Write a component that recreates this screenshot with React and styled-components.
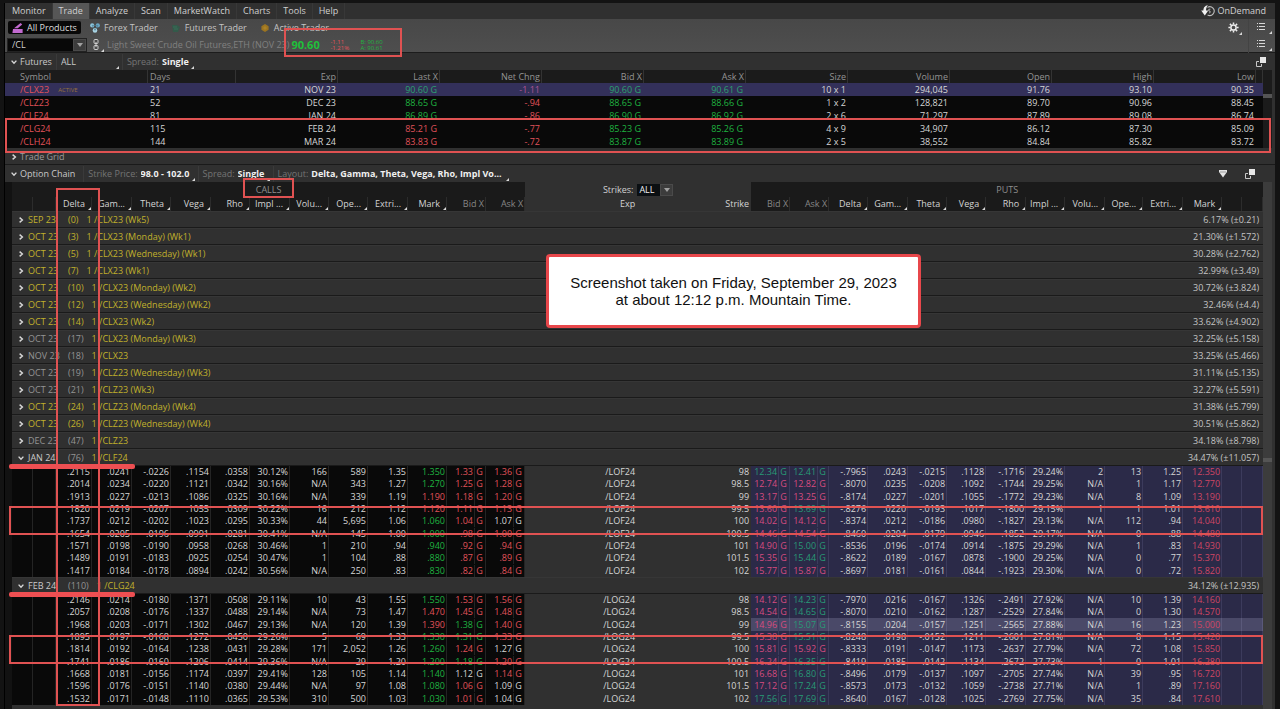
import React, { useState } from "react";
import styled, { createGlobalStyle, css } from "styled-components";

const GlobalStyle = createGlobalStyle`
  * {
    box-sizing: border-box;
  }
  body {
    margin: 0;
    background: #0c0c0c;
    color: #d0d0d0;
    font-family: "Open Sans", "Noto Sans", sans-serif;
    font-size: 9px;
    line-height: 12px;
  }
  button, input, select {
    font: inherit;
    color: inherit;
    border: 0;
    padding: 0;
    margin: 0;
    background: none;
  }
`;

const tones = {
  up: "#1fb340",
  down: "#e0525a",
  flat: "#d6d6d6",
  upSelected: "#2ca070",
  downSelected: "#b05696",
  upPut: "#289a76",
  downPut: "#d84c80",
  mark: "#d04664",
};

const menuItems = ["Monitor", "Trade", "Analyze", "Scan", "MarketWatch", "Charts", "Tools", "Help"];

const futuresColumns = ["Symbol", "Days", "Exp", "Last X", "Net Chng", "Bid X", "Ask X", "Size", "Volume", "Open", "High", "Low"];
const futuresWidths = [143, 88, 102, 102, 102, 102, 102, 102, 102, 102, 102, 102, 7];

const futures = [
  ["/CLX23", "21", "NOV 23", "90.60 G", "-1.11", "90.60 G", "90.61 G", "10 x 1", "294,045", "91.76", "93.10", "90.35"],
  ["/CLZ23", "52", "DEC 23", "88.65 G", "-.94", "88.65 G", "88.66 G", "1 x 2", "128,821", "89.70", "90.96", "88.45"],
  ["/CLF24", "81", "JAN 24", "86.89 G", "-.86", "86.90 G", "86.92 G", "2 x 6", "71,297", "87.89", "89.08", "86.74"],
  ["/CLG24", "115", "FEB 24", "85.21 G", "-.77", "85.23 G", "85.26 G", "4 x 9", "34,907", "86.12", "87.30", "85.09"],
  ["/CLH24", "144", "MAR 24", "83.83 G", "-.72", "83.87 G", "83.89 G", "2 x 5", "38,552", "84.84", "85.82", "83.72"],
];

const greeks = ["Delta", "Gam...", "Theta", "Vega", "Rho", "Impl ...", "Volu...", "Ope...", "Extri...", "Mark"];

const chainWidths = [
  21, 23, 36, 40, 39, 40, 39, 40, 39, 39, 40, 39, 39, 39,
  112, 114,
  39, 39, 39, 40, 39, 39, 40, 39, 40, 38, 40, 39, 20, 21,
];

// month, days, name, implied move, weekly (yellow) or not
const expirations = [
  ["SEP 23", 0, "1 /CLX23 (Wk5)", "6.17% (±0.21)", true],
  ["OCT 23", 3, "1 /CLX23 (Monday) (Wk1)", "21.30% (±1.572)", true],
  ["OCT 23", 5, "1 /CLX23 (Wednesday) (Wk1)", "30.28% (±2.762)", true],
  ["OCT 23", 7, "1 /CLX23 (Wk1)", "32.99% (±3.49)", true],
  ["OCT 23", 10, "1 /CLX23 (Monday) (Wk2)", "30.72% (±3.824)", true],
  ["OCT 23", 12, "1 /CLX23 (Wednesday) (Wk2)", "32.46% (±4.4)", true],
  ["OCT 23", 14, "1 /CLX23 (Wk2)", "33.62% (±4.902)", true],
  ["OCT 23", 17, "1 /CLX23 (Monday) (Wk3)", "32.25% (±5.158)", false],
  ["NOV 23", 18, "1 /CLX23", "33.25% (±5.466)", false],
  ["OCT 23", 19, "1 /CLZ23 (Wednesday) (Wk3)", "31.11% (±5.135)", false],
  ["OCT 23", 21, "1 /CLZ23 (Wk3)", "32.27% (±5.591)", false],
  ["OCT 23", 24, "1 /CLZ23 (Monday) (Wk4)", "31.38% (±5.799)", true],
  ["OCT 23", 26, "1 /CLZ23 (Wednesday) (Wk4)", "30.51% (±5.862)", true],
  ["DEC 23", 47, "1 /CLZ23", "34.18% (±8.798)", false],
];

// colours: mark, bid, ask for calls, then bid, ask for puts
const janRows = [
  ["98", ".2115 .0241 -.0226 .1154 .0358 30.12% 166 589 1.35 1.350", "1.33 1.36", "12.34 12.41", "-.7965 .0243 -.0215 .1128 -.1716 29.24% 2 13 1.25 12.350", "grrgg"],
  ["98.5", ".2014 .0234 -.0220 .1121 .0342 30.16% N/A 343 1.27 1.270", "1.25 1.28", "12.74 12.82", "-.8070 .0235 -.0208 .1092 -.1744 29.25% N/A 1 1.17 12.770", "grrrr"],
  ["99", ".1913 .0227 -.0213 .1086 .0325 30.16% N/A 339 1.19 1.190", "1.18 1.20", "13.17 13.25", "-.8174 .0227 -.0201 .1055 -.1772 29.23% N/A 8 1.09 13.190", "rrrrr"],
  ["99.5", ".1820 .0219 -.0207 .1055 .0309 30.22% 16 212 1.12 1.120", "1.11 1.13", "13.60 13.69", "-.8276 .0220 -.0193 .1017 -.1800 29.15% 1 1 1.01 13.610", "rrrrg"],
  ["100", ".1737 .0212 -.0202 .1023 .0295 30.33% 44 5,695 1.06 1.060", "1.04 1.07", "14.02 14.12", "-.8374 .0212 -.0186 .0980 -.1827 29.13% N/A 112 .94 14.040", "grwrr"],
  ["100.5", ".1654 .0205 -.0196 .0991 .0281 30.41% N/A 145 1.00 1.000", ".98 1.00", "14.46 14.54", "-.8460 .0204 -.0179 .0946 -.1852 29.17% N/A 0 .88 14.480", "grrrr"],
  ["101", ".1571 .0198 -.0190 .0958 .0268 30.46% 1 210 .94 .940", ".92 .94", "14.90 15.00", "-.8536 .0196 -.0174 .0914 -.1875 29.29% N/A 1 .83 14.930", "grrrg"],
  ["101.5", ".1489 .0191 -.0183 .0925 .0254 30.47% 1 104 .88 .880", ".87 .89", "15.35 15.44", "-.8622 .0189 -.0167 .0878 -.1900 29.25% N/A 0 .77 15.370", "grrrg"],
  ["102", ".1417 .0184 -.0178 .0894 .0242 30.56% N/A 250 .83 .830", ".82 .84", "15.77 15.87", "-.8697 .0181 -.0161 .0844 -.1923 29.30% N/A 0 .72 15.820", "grrrr"],
];

const febRows = [
  ["98", ".2146 .0214 -.0180 .1371 .0508 29.11% 10 43 1.55 1.550", "1.53 1.56", "14.12 14.23", "-.7970 .0216 -.0167 .1326 -.2491 27.92% N/A 10 1.39 14.160", "grrrg"],
  ["98.5", ".2057 .0208 -.0176 .1337 .0488 29.14% N/A 73 1.47 1.470", "1.45 1.48", "14.54 14.65", "-.8070 .0210 -.0162 .1287 -.2529 27.84% N/A 0 1.30 14.570", "rrrrg"],
  ["99", ".1968 .0203 -.0171 .1302 .0467 29.13% N/A 120 1.39 1.390", "1.38 1.40", "14.96 15.07", "-.8155 .0204 -.0157 .1251 -.2565 27.88% N/A 16 1.23 15.000", "rgrrg"],
  ["99.5", ".1895 .0197 -.0168 .1272 .0450 29.26% 5 69 1.33 1.330", "1.31 1.33", "15.38 15.51", "-.8248 .0198 -.0152 .1211 -.2601 27.81% N/A 8 1.15 15.420", "ggrrg"],
  ["100", ".1814 .0192 -.0164 .1238 .0431 29.28% 171 2,052 1.26 1.260", "1.24 1.27", "15.81 15.92", "-.8333 .0191 -.0147 .1173 -.2637 27.79% N/A 72 1.08 15.850", "grwrr"],
  ["100.5", ".1741 .0186 -.0160 .1206 .0414 29.36% N/A 29 1.20 1.200", "1.18 1.20", "16.24 16.35", "-.8419 .0185 -.0142 .1134 -.2672 27.73% 1 0 1.01 16.280", "ggrrg"],
  ["101", ".1668 .0181 -.0156 .1174 .0397 29.41% 128 105 1.14 1.140", "1.12 1.14", "16.68 16.80", "-.8496 .0179 -.0137 .1097 -.2705 27.74% N/A 39 .95 16.720", "gwrrg"],
  ["101.5", ".1596 .0176 -.0151 .1140 .0380 29.44% N/A 97 1.08 1.080", "1.06 1.09", "17.12 17.24", "-.8573 .0173 -.0132 .1059 -.2738 27.71% N/A 1 .89 17.160", "grwrg"],
  ["102", ".1532 .0171 -.0148 .1110 .0365 29.53% 310 500 1.03 1.030", "1.01 1.04", "17.56 17.69", "-.8640 .0167 -.0128 .1025 -.2769 27.75% N/A 35 .84 17.610", "grwgg"],
];

const callTone = { g: "up", r: "down", w: "flat" };
const putTone = { g: "upPut", r: "downPut", w: "flat" };

/* ---------- icons ---------- */

const Chevron = ({ open }) => (
  <svg width="6" height="6" viewBox="0 0 6 6" fill="none" stroke="#d8d8d8" strokeWidth="1.4">
    <path d={open ? "M.6 1.6 3 4.2 5.4 1.6" : "M1.6 .6 4.4 3 1.6 5.4"} />
  </svg>
);

const PopoutIcon = () => (
  <svg width="10" height="10" viewBox="0 0 10 10">
    <path d="M3 4.5H.5v5h5V7" fill="none" stroke="#c8c8c8" />
    <rect x="4" y="0" width="6" height="6" fill="#e6e6e6" />
  </svg>
);

const ListIcon = () => (
  <svg width="8" height="8" viewBox="0 0 8 8" fill="#d8d8d8">
    <path d="M0 0h1v1H0zM2 0h6v1H2zM0 3h1v1H0zM2 3h6v1H2zM0 6h1v1H0zM2 6h6v1H2z" />
  </svg>
);

const GearIcon = () => (
  <svg width="11" height="11" viewBox="0 0 11 11" fill="none" stroke="#ececec">
    <circle cx="5.5" cy="5.5" r="2.6" strokeWidth="1.5" />
    <path
      d="M5.5 .4v2M5.5 8.6v2M.4 5.5h2M8.6 5.5h2M1.9 1.9l1.3 1.3M7.8 7.8l1.3 1.3M9.1 1.9 7.8 3.2M3.2 7.8 1.9 9.1"
      strokeWidth="1.5"
    />
  </svg>
);

const OnDemandIcon = () => (
  <svg width="14" height="12" viewBox="0 0 14 12" fill="none">
    <path d="M6.4 2.4A4.4 4.4 0 1 1 6.6 10" stroke="#bdbdbd" strokeWidth="1.1" />
    <path d="M9.4 4.2H7.8v1.8c1.8-.4 2.2 1.8.4 2" stroke="#bdbdbd" strokeWidth=".9" />
    <path d="M7 .2C3.6.6 2.4 2.8 2.4 5.6H.2l3.6 5 3.5-5H5C5 3.4 5.6 1.6 7 .2z" fill="#f0f0f0" />
  </svg>
);

const ProductsIcon = () => (
  <svg width="11" height="10" viewBox="0 0 11 10" fill="#c26ad0">
    <path d="M1 6h9.6v4H.4z" />
    <path d="M2 5.2 8.6 0l1.6 1.6-4.4 3.6z" />
  </svg>
);

const ForexIcon = () => (
  <svg width="10" height="10" viewBox="0 0 10 10">
    <circle cx="2.2" cy="2.4" r="2.1" fill="#8cc4dc" />
    <circle cx="7.8" cy="2.4" r="2.1" fill="#6aa6c4" />
    <circle cx="5" cy="7.4" r="2.3" fill="#a9d4e4" />
    <path d="M2.2 2.4h5.6L5 7.4z" fill="none" stroke="#48788c" strokeWidth=".7" />
  </svg>
);

const FuturesIcon = () => (
  <svg width="10" height="10" viewBox="0 0 10 10">
    <path d="M1 2h5l3 2-2 5H2z" fill="#335a4a" />
    <path d="M2 4h4M3 6h4" stroke="#3b6c58" />
  </svg>
);

const ActiveIcon = () => (
  <svg width="10" height="10" viewBox="0 0 10 10">
    <path d="M5 1 8.6 3.2v3.6L5 9 1.4 6.8V3.2z" fill="#9c7420" />
    <path d="M5 3 7 5 5 7 3 5z" fill="#ac8226" />
  </svg>
);

const LinkIcon = () => (
  <svg width="6" height="11" viewBox="0 0 6 11" fill="none" stroke="#cfcfcf">
    <rect x="1" y=".5" width="4" height="4" rx="1" />
    <rect x="1" y="6.5" width="4" height="4" rx="1" />
    <path d="M3 3v5" />
  </svg>
);

const DownIcon = () => (
  <svg width="6" height="6" viewBox="0 0 6 6">
    <path d="M0 1h6L3 5z" fill="#a0a0a0" />
  </svg>
);

const FilterIcon = () => (
  <svg width="8" height="8" viewBox="0 0 8 8">
    <path d="M0 0h8v2L4 7.6 0 2z" fill="#e4e4e4" />
    <path d="M1 2h6" stroke="#8a8a8a" strokeWidth=".8" />
  </svg>
);

/* ---------- shell ---------- */

const corner = css`
  position: relative;
  &::after {
    content: "";
    position: absolute;
    right: 0;
    bottom: 1px;
    border-left: 3px solid transparent;
    border-bottom: 3px solid #d8d8d8;
  }
`;

const Desktop = styled.div`
  position: relative;
  display: flex;
  flex-direction: column;
  height: 100vh;
  overflow: hidden;
  padding: 3px 5px 0 4px;
  background: #131313;
`;

const Window = styled.main`
  flex: 1;
  min-height: 0;
  display: flex;
  flex-direction: column;
  border-left: 1px solid #000;
  background: #303030;
`;

const MenuBar = styled.nav`
  display: flex;
  height: 16px;
  padding-left: 1px;
  background: #303030;
`;

const MenuButton = styled.button`
  padding: 0 6px;
  border-right: 1px solid #383838;
  background: ${(p) => (p.$active ? "#565656" : "none")};
`;

const OnDemand = styled.button`
  display: flex;
  align-items: center;
  gap: 3px;
  margin-left: auto;
  padding-right: 9px;
`;

const Toolbar = styled.header`
  display: grid;
  grid-template-columns: 1fr 27px;
  height: 34px;
  background: linear-gradient(#484848, #4e4e4e);
  border-bottom: 1px solid #1c1c1c;
`;

const ToolRows = styled.div`
  display: grid;
  grid-template-rows: 17px 17px;
  min-width: 0;
`;

const ToolRow = styled.div`
  display: flex;
  align-items: center;
  padding: 0 6px 0 2px;
`;

const ToolSide = styled.div`
  display: grid;
  grid-template-rows: 17px 17px;
  padding-right: 3px;
  border-left: 1px solid #434343;
`;

const IconButton = styled.button`
  ${corner}
  display: grid;
  place-items: center;
  min-width: 17px;
  height: 16px;
`;

const Push = styled.div`
  margin-left: auto;
`;

const ProductButton = styled.button`
  display: flex;
  align-items: center;
  gap: 4px;
  height: 13px;
  padding: 0 4px;
  margin: 0 4px 0 1px;
  border-radius: 2px;
  white-space: nowrap;
  background: ${(p) => (p.$active ? "#080808" : "none")};
  color: ${(p) => (p.$active ? "#dcdcdc" : "#c4c4c4")};
`;

const SymbolBox = styled.div`
  display: flex;
  width: 80px;
  height: 14px;
  background: #080808;
  border: 1px solid #222;
`;

const SymbolInput = styled.input`
  flex: 1;
  min-width: 0;
  padding-left: 4px;
  outline: 0;
`;

const DropButton = styled.button`
  display: grid;
  place-items: center;
  width: 13px;
  background: #3c3c3c;
  border: 1px solid #4a4a4a;
`;

const Description = styled.span`
  margin-left: 3px;
  min-width: 176px;
  white-space: nowrap;
  color: #808080;
`;

const LastPrice = styled.strong`
  margin-left: 2px;
  width: 39px;
  font-size: 11px;
  color: #20c03a;
`;

const MiniQuote = styled.span`
  width: 30px;
  font-size: 6px;
  line-height: 6px;
  white-space: nowrap;
  color: ${(p) => tones[p.$tone]};
`;

const SectionBar = styled.div`
  display: flex;
  align-items: center;
  height: 17px;
  padding: 1px ${(p) => (p.$inset ? 20 : 9)}px 0 6px;
  background: #303030;
  border-bottom: ${(p) => (p.$line ? "1px solid #1a1a1a" : 0)};
`;

const SectionTitle = styled.button`
  display: flex;
  align-items: center;
  gap: 3px;
  white-space: nowrap;
  color: ${(p) => (p.$dim ? "#9a9a9a" : "#c9c9c9")};
`;

const Picker = styled.label`
  ${corner}
  display: flex;
  align-items: center;
  gap: 3px;
  height: 16px;
  padding: 0 4px;
  margin-left: ${(p) => p.$gap || 3}px;
  border-left: 1px solid #3a3a3a;
  white-space: nowrap;
  color: #747474;
`;

const PickerSelect = styled.select`
  appearance: none;
  outline: 0;
  width: ${(p) => p.$width}px;
  font-weight: ${(p) => (p.$plain ? 400 : 700)};
  color: ${(p) => (p.$plain ? "#c9c9c9" : "#f0f0f0")};
`;

const SideButton = styled.button`
  display: grid;
  place-items: center;
  margin-left: 18px;
`;

/* ---------- futures ---------- */

const Scroller = styled.div`
  display: flex;
  min-height: 0;
`;

const ScrollTrack = styled.div`
  flex: none;
  width: 9px;
  margin-right: 3px;
  padding-top: ${(p) => p.$top}px;
  background: ${(p) => p.$color};
`;

const ScrollThumb = styled.div`
  height: 4px;
  background: #555;
`;

const Table = styled.table`
  flex: 1;
  width: 100%;
  min-width: 0;
  table-layout: fixed;
  border-collapse: separate;
  border-spacing: 0;
  white-space: nowrap;
`;

const FuturesHead = styled.th`
  height: 13px;
  padding: 0 1px 0 ${(p) => (p.$left ? (p.$first ? 15 : 2) : 0)}px;
  text-align: ${(p) => (p.$left ? "left" : "right")};
  font-weight: 400;
  background: #1b1b1b;
  border-right: 1px solid #333;
  color: #949494;
`;

const FuturesRow = styled.tr`
  height: 13px;
  background: ${(p) => (p.$selected ? "#33305a" : "#090909")};
`;

const FuturesCell = styled.td`
  padding: 0 ${(p) => (p.$quote ? 3 : 2)}px 0 ${(p) => (p.$left ? (p.$first ? 15 : 2) : 0)}px;
  text-align: ${(p) => (p.$left ? "left" : "right")};
  color: ${(p) => tones[p.$tone]};
`;

const ActiveTag = styled.span`
  margin-left: 9px;
  font-size: 6px;
  line-height: 6px;
  vertical-align: 1px;
  color: #96723c;
`;

/* ---------- option chain ---------- */

const ChainArea = styled.section`
  flex: 1;
  display: flex;
  min-height: 0;
  overflow: hidden;
  padding-left: 7px;
  background: linear-gradient(90deg, #121212 7px, #303030 7px);
`;

const ChainScroll = styled.div`
  flex: 1;
  min-width: 0;
`;

const SideHead = styled.th`
  height: 15px;
  font-weight: 400;
  background: ${(p) => (p.$middle ? "#303030" : "#1a1a1a")};
  color: #8e8e8e;
`;

const StrikesPicker = styled.div`
  display: flex;
  justify-content: center;
  align-items: center;
  gap: 4px;
  color: #d0d0d0;
`;

const StrikesBox = styled.div`
  display: flex;
  height: 12px;
  width: 36px;
`;

const StrikesInput = styled.input`
  width: 23px;
  padding-left: 2px;
  background: #0b0f12;
  outline: 0;
  color: #eee;
`;

const ChainHead = styled.th`
  ${(p) => p.$corner && corner}
  height: 14px;
  padding: 0 ${(p) => (p.$corner ? 6 : 1)}px 0 0;
  text-align: right;
  font-weight: 400;
  background: ${(p) => (p.$middle ? "#303030" : "#1a1a1a")};
  border-right: 1px solid ${(p) => (p.$middle ? "#303030" : "#2c2c2c")};
  color: ${(p) => (p.$dim ? "#868686" : "#d4d4d4")};
`;

const GroupCell = styled.th`
  height: 17px;
  padding: 0 4px 0 6px;
  font-weight: 400;
  background: #303030;
  border-bottom: 1px solid #1a1a1a;
  border-top: 1px solid #363636;
`;

const GroupLine = styled.button`
  display: flex;
  align-items: center;
  width: 100%;
  height: 15px;
  text-align: left;
`;

const Month = styled.span`
  width: 40px;
  margin-left: 4px;
  color: ${(p) => p.$color};
`;

const Days = styled.span`
  margin-right: 8px;
  color: ${(p) => p.$color};
`;

const Contract = styled.span`
  color: #c0b02c;
`;

const Move = styled.span`
  margin-left: auto;
  color: #c4c4c4;
`;

const ChainBody = styled.tbody`
  tr {
    height: 12px;
  }
  tr:nth-child(3n + 1) {
    height: 13px;
  }
`;

const sides = {
  call: css`
    background: #090909;
    border-color: #242424;
  `,
  middle: css`
    background: #303030;
    border-color: #303030;
  `,
  put: css`
    background: #2b2a48;
    border-color: #3c3b5c;
  `,
  hover: css`
    background: #4a4968;
    border-color: #5a597a;
  `,
};

const ChainCell = styled.td`
  padding: 0 1px 0 0;
  text-align: right;
  border-right: 1px solid;
  color: ${(p) => tones[p.$tone || "flat"]};
  ${(p) => sides[p.$side]}
`;

const Exchange = styled.span`
  display: inline-block;
  width: 10px;
  margin-left: 1px;
  border-left: 1px solid ${(p) => (p.$put ? "#3c3b5c" : "#242424")};
  text-align: center;
`;

/* ---------- markup drawn over the platform ---------- */

const Frame = styled.div`
  position: absolute;
  pointer-events: none;
  border: 2px solid #e05252;
`;

const PriceFrame = styled(Frame)`
  left: 284px;
  top: 28px;
  width: 118px;
  height: 29px;
`;

const FuturesFrame = styled(Frame)`
  left: 5px;
  right: 9px;
  top: 118px;
  height: 35px;
`;

const CallsFrame = styled(Frame)`
  left: 243px;
  top: 178px;
  width: 51px;
  height: 20px;
`;

const DeltaFrame = styled(Frame)`
  left: 56px;
  top: 188px;
  width: 44px;
  height: 518px;
`;

const StrikeFrame = styled(Frame)`
  left: 9px;
  right: 17px;
  top: ${(p) => p.$top}px;
  height: 29px;
`;

const Underline = styled.div`
  position: absolute;
  left: 9px;
  top: ${(p) => p.$top}px;
  width: 126px;
  height: 5px;
  border-radius: 2px;
  background: #ee4f52;
`;

const Callout = styled.aside`
  position: absolute;
  left: 546px;
  top: 254px;
  width: 375px;
  padding: 17px 10px;
  border: 3px solid #e8474b;
  border-radius: 4px;
  background: #fff;
  color: #111;
  text-align: center;
  font: 15px/17px "Liberation Sans", Arial, sans-serif;
`;

const Quote = ({ value, tone, side }) => (
  <ChainCell $side={side} $tone={tone}>
    {value}
    <Exchange $put={side !== "call"}>G</Exchange>
  </ChainCell>
);

const ExpirationRow = ({ data, open, onToggle }) => {
  const [month, days, name, move, weekly] = data;
  const color = weekly ? "#c0b02c" : "#949494";
  return (
    <tr>
      <GroupCell colSpan={30}>
        <GroupLine onClick={onToggle}>
          <Chevron open={open} />
          <Month $color={open !== undefined ? "#c9c9c9" : color}>{month}</Month>
          <Days $color={color}>({days})</Days>
          <Contract>{name}</Contract>
          <Move>{move}</Move>
        </GroupLine>
      </GroupCell>
    </tr>
  );
};

const StrikeRow = ({ row, root, hover }) => {
  const [strike, call, callQuote, putQuote, put, colors] = row;
  const [callBid, callAsk] = callQuote.split(" ");
  const [putBid, putAsk] = putQuote.split(" ");
  const putSide = hover ? "hover" : "put";
  return (
    <tr>
      <ChainCell $side="call" />
      <ChainCell $side="call" />
      {call.split(" ").map((v, i) => (
        <ChainCell key={i} $side="call" $tone={i === 9 ? callTone[colors[0]] : "flat"}>
          {v}
        </ChainCell>
      ))}
      <Quote value={callBid} tone={callTone[colors[1]]} side="call" />
      <Quote value={callAsk} tone={callTone[colors[2]]} side="call" />
      <ChainCell $side="middle">{root}</ChainCell>
      <ChainCell $side="middle">{strike}</ChainCell>
      <Quote value={putBid} tone={putTone[colors[3]]} side={putSide} />
      <Quote value={putAsk} tone={putTone[colors[4]]} side={putSide} />
      {put.split(" ").map((v, i) => (
        <ChainCell key={i} $side={putSide} $tone={i === 9 ? "mark" : "flat"}>
          {v}
        </ChainCell>
      ))}
      <ChainCell $side={putSide} />
      <ChainCell $side={putSide} />
    </tr>
  );
};

const Futures = () => {
  const toneFor = (row, col) => {
    const selected = row === 0;
    if (col === 0 || col === 4) return selected && col === 4 ? "downSelected" : "down";
    if (col === 3 && row > 2) return "down";
    if (col === 3 || col === 5 || col === 6) return selected ? "upSelected" : "up";
    return "flat";
  };

  return (
    <Scroller>
      <Table>
        <colgroup>
          {futuresWidths.map((w, i) => (
            <col key={i} width={w} />
          ))}
        </colgroup>
        <thead>
          <tr>
            {futuresColumns.map((name, i) => (
              <FuturesHead key={name} $left={i < 2} $first={i === 0}>
                {name}
              </FuturesHead>
            ))}
            <FuturesHead />
          </tr>
        </thead>
        <tbody>
          {futures.map((row, r) => (
            <FuturesRow key={row[0]} $selected={r === 0}>
              {row.map((value, c) => (
                <FuturesCell
                  key={c}
                  $left={c < 2}
                  $first={c === 0}
                  $quote={c === 3 || c === 5 || c === 6}
                  $tone={toneFor(r, c)}
                >
                  {value}
                  {r === 0 && c === 0 && <ActiveTag>ACTIVE</ActiveTag>}
                </FuturesCell>
              ))}
              <td />
            </FuturesRow>
          ))}
        </tbody>
      </Table>
      <ScrollTrack $color="#1b1b1b" $top={24}>
        <ScrollThumb />
      </ScrollTrack>
    </Scroller>
  );
};

const OptionChain = () => {
  const [strikes, setStrikes] = useState("ALL");
  const [open, setOpen] = useState({ jan: true, feb: true });
  const toggle = (key) => setOpen({ ...open, [key]: !open[key] });

  return (
    <ChainArea>
      <ChainScroll>
        <Table>
          <colgroup>
            {chainWidths.map((w, i) => (
              <col key={i} width={w} />
            ))}
          </colgroup>
          <thead>
            <tr>
              <SideHead colSpan={14}>CALLS</SideHead>
              <SideHead colSpan={2} $middle>
                <StrikesPicker>
                  <label htmlFor="strikes">Strikes:</label>
                  <StrikesBox>
                    <StrikesInput id="strikes" value={strikes} onChange={(e) => setStrikes(e.target.value)} />
                    <DropButton aria-label="Choose strikes">
                      <DownIcon />
                    </DropButton>
                  </StrikesBox>
                </StrikesPicker>
              </SideHead>
              <SideHead colSpan={14}>PUTS</SideHead>
            </tr>
            <tr>
              <ChainHead />
              <ChainHead />
              {greeks.map((name) => (
                <ChainHead key={name} $corner>{name}</ChainHead>
              ))}
              <ChainHead $dim>Bid X</ChainHead>
              <ChainHead $dim>Ask X</ChainHead>
              <ChainHead $middle>Exp</ChainHead>
              <ChainHead $middle>Strike</ChainHead>
              <ChainHead $dim>Bid X</ChainHead>
              <ChainHead $dim>Ask X</ChainHead>
              {greeks.map((name) => (
                <ChainHead key={name} $corner>{name}</ChainHead>
              ))}
              <ChainHead />
              <ChainHead />
            </tr>
          </thead>
          <tbody>
            {expirations.map((data) => (
              <ExpirationRow key={data[1]} data={data} />
            ))}
          </tbody>
          <ChainBody>
            <ExpirationRow
              data={["JAN 24", 76, "1 /CLF24", "34.47% (±11.057)", false]}
              open={open.jan}
              onToggle={() => toggle("jan")}
            />
            {open.jan && janRows.map((row) => <StrikeRow key={row[0]} row={row} root="/LOF24" />)}
          </ChainBody>
          <ChainBody>
            <ExpirationRow
              data={["FEB 24", 110, "1 /CLG24", "34.12% (±12.935)", false]}
              open={open.feb}
              onToggle={() => toggle("feb")}
            />
            {open.feb &&
              febRows.map((row) => <StrikeRow key={row[0]} row={row} root="/LOG24" hover={row[0] === "99"} />)}
          </ChainBody>
        </Table>
      </ChainScroll>
      <ScrollTrack $color="#3c3c3c" $top={276}>
        <ScrollThumb />
      </ScrollTrack>
    </ChainArea>
  );
};

const App = () => {
  const [symbol, setSymbol] = useState("/CL");

  return (
    <>
      <GlobalStyle />
      <Desktop>
        <Window>
          <MenuBar>
            {menuItems.map((name) => (
              <MenuButton key={name} $active={name === "Trade"}>{name}</MenuButton>
            ))}
            <OnDemand>
              <OnDemandIcon />
              OnDemand
            </OnDemand>
          </MenuBar>

          <Toolbar>
            <ToolRows>
              <ToolRow>
                <ProductButton $active>
                  <ProductsIcon />
                  All Products
                </ProductButton>
                <ProductButton>
                  <ForexIcon />
                  Forex Trader
                </ProductButton>
                <ProductButton>
                  <FuturesIcon />
                  Futures Trader
                </ProductButton>
                <ProductButton>
                  <ActiveIcon />
                  Active Trader
                </ProductButton>
                <Push>
                  <IconButton aria-label="Settings">
                    <GearIcon />
                  </IconButton>
                </Push>
              </ToolRow>
              <ToolRow>
                <SymbolBox>
                  <SymbolInput aria-label="Symbol" value={symbol} onChange={(e) => setSymbol(e.target.value)} />
                  <DropButton aria-label="Recent symbols">
                    <DownIcon />
                  </DropButton>
                </SymbolBox>
                <IconButton aria-label="Link">
                  <LinkIcon />
                </IconButton>
                <Description>Light Sweet Crude Oil Futures,ETH (NOV 23)</Description>
                <LastPrice>90.60</LastPrice>
                <MiniQuote $tone="down">
                  -1.11
                  <br />
                  -1.21%
                </MiniQuote>
                <MiniQuote $tone="up">
                  B: 90.60
                  <br />
                  A: 90.61
                </MiniQuote>
              </ToolRow>
            </ToolRows>
            <ToolSide>
              <IconButton aria-label="Toolbar menu">
                <ListIcon />
              </IconButton>
              <IconButton aria-label="Symbol menu">
                <ListIcon />
              </IconButton>
            </ToolSide>
          </Toolbar>

          <SectionBar>
            <SectionTitle>
              <Chevron open />
              Futures
            </SectionTitle>
            <Picker $gap={4}>
              <PickerSelect aria-label="Futures filter" $width={54} $plain>
                <option>ALL</option>
              </PickerSelect>
            </Picker>
            <Picker>
              Spread:
              <PickerSelect $width={28}>
                <option>Single</option>
              </PickerSelect>
            </Picker>
            <Push>
              <SideButton aria-label="Detach futures">
                <PopoutIcon />
              </SideButton>
            </Push>
          </SectionBar>
          <Futures />

          <SectionBar $line>
            <SectionTitle $dim>
              <Chevron />
              Trade Grid
            </SectionTitle>
          </SectionBar>

          <SectionBar $inset>
            <SectionTitle>
              <Chevron open />
              Option Chain
            </SectionTitle>
            <Picker $gap={8}>
              Strike Price:
              <PickerSelect $width={50}>
                <option>98.0 - 102.0</option>
              </PickerSelect>
            </Picker>
            <Picker>
              Spread:
              <PickerSelect $width={28}>
                <option>Single</option>
              </PickerSelect>
            </Picker>
            <Picker>
              Layout:
              <PickerSelect $width={194}>
                <option>Delta, Gamma, Theta, Vega, Rho, Impl Vo...</option>
              </PickerSelect>
            </Picker>
            <Push />
            <SideButton aria-label="Filter">
              <FilterIcon />
            </SideButton>
            <SideButton aria-label="Detach option chain">
              <PopoutIcon />
            </SideButton>
          </SectionBar>
          <OptionChain />
        </Window>

        <PriceFrame />
        <FuturesFrame />
        <CallsFrame />
        <DeltaFrame />
        <StrikeFrame $top={506} />
        <StrikeFrame $top={635} />
        <Underline $top={464} />
        <Underline $top={592} />
        <Callout>
          Screenshot taken on Friday, September 29, 2023
          <br />
          at about 12:12 p.m. Mountain Time.
        </Callout>
      </Desktop>
    </>
  );
};

export default App;
